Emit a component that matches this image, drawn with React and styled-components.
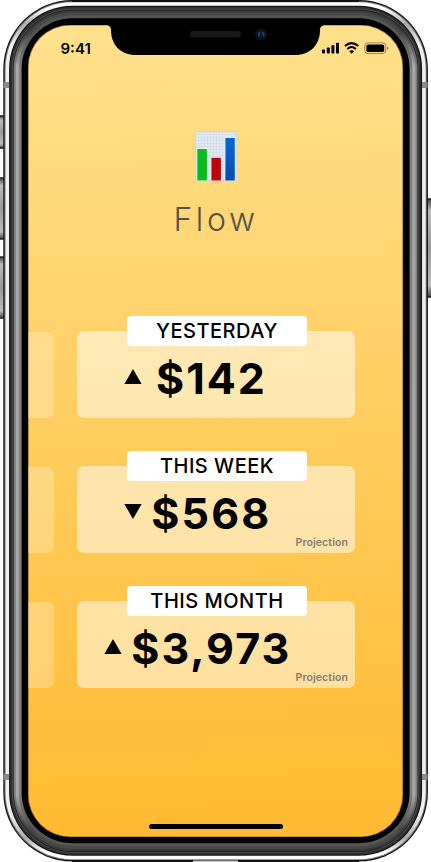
import React from "react";
import styled, { createGlobalStyle } from "styled-components";

const GlobalStyle = createGlobalStyle`
  *, *::before, *::after { box-sizing: border-box; }
  body { margin: 0; background: #fff; font-family: Inter, "Liberation Sans", sans-serif; color: #000; }
`;

const Phone = styled.div`
  position: relative;
  width: 431px;
  height: 862px;
  overflow: hidden;
  padding: 25px 28px;
`;

const BezelArt = styled.svg`
  position: absolute;
  inset: 0;
`;

const Screen = styled.main`
  position: relative;
  width: 375px;
  height: 812px;
  border-radius: 42px;
  overflow: hidden;
  display: flex;
  flex-direction: column;
  align-items: center;
  background: linear-gradient(178deg, #ffe18e 0%, #ffbb33 96%);
  box-shadow: inset 0 0 0 0.6px rgba(90, 65, 20, 0.7);
`;

const StatusBar = styled.header`
  width: 100%;
  height: 44px;
  flex: none;
  display: flex;
  justify-content: space-between;
  padding: 15px 14px 0 32.5px;
`;

const Clock = styled.time`
  font-size: 15px;
  line-height: 18px;
  font-weight: 600;
  letter-spacing: 0;
`;

const StatusIcons = styled.svg`
  display: block;
  margin-top: 2px;
`;

const NotchArt = styled.svg`
  position: absolute;
  left: 75px;
  top: 0;
`;

const Brand = styled.section`
  display: flex;
  flex-direction: column;
  align-items: center;
  padding: 62px 0 0 1px;
  height: 262px;
  flex: none;
`;

const Title = styled.h1`
  margin: 19px 0 0;
  font-size: 32px;
  line-height: 40px;
  font-weight: 300;
  letter-spacing: 3.6px;
  color: #555149;
`;

const Stats = styled.section`
  width: 100%;
  display: flex;
  flex-direction: column;
  gap: 48px;
`;

const StatRow = styled.div`
  display: flex;
  gap: 23px;
  height: 87px;
`;

const PreviousCard = styled.div`
  width: 26px;
  margin-top: 1px;
  border-radius: 0 7px 7px 0;
  background: rgba(255, 255, 255, 0.25);
`;

const Card = styled.article`
  position: relative;
  width: 278px;
  border-radius: 7px;
  background: rgba(255, 255, 255, 0.5);
`;

const Label = styled.h2`
  width: 180px;
  height: 30px;
  margin: -15px 0 0 50px;
  border-radius: 4px;
  background: #fff;
  font-size: 20px;
  line-height: 30px;
  font-weight: 500;
  letter-spacing: 0.5px;
  text-align: center;
`;

const Reading = styled.div`
  display: flex;
  align-items: center;
  height: 64px;
  gap: ${(p) => p.$gap}px;
  padding-left: ${(p) => p.$start}px;
`;

const Trend = styled.svg`
  flex: none;
  margin-top: -3px;
`;

const Amount = styled.strong`
  font-size: 43px;
  line-height: 52px;
  font-weight: 700;
  letter-spacing: ${(p) => p.$tracking}px;
`;

const Note = styled.small`
  position: absolute;
  right: 7px;
  bottom: 3px;
  font-size: 10.5px;
  line-height: 14px;
  font-weight: 600;
  letter-spacing: 0.1px;
  color: #837c70;
`;

const HomeBar = styled.div`
  width: 134px;
  height: 5px;
  border-radius: 3px;
  background: #000;
  margin: auto 0 8px;
`;

const stats = [
  { label: "YESTERDAY", amount: "$142", up: true, start: 47, gap: 14, tracking: 2 },
  { label: "THIS WEEK", amount: "$568", up: false, start: 47, gap: 9.3, tracking: 2.1 },
  { label: "THIS MONTH", amount: "$3,973", up: true, start: 27, gap: 9.3, tracking: 2 },
];

const rings = [
  { t: 0, fill: "#111" },
  { t: 1.2, fill: "#777" },
  { t: 2.2, fill: "url(#chrome)" },
  { t: 5.8, fill: "#161616" },
  { t: 7, fill: "#303030" },
  { t: 8.8, fill: "#555" },
  { t: 9.6, fill: "#1c1c1c" },
  { t: 10.4, fill: "url(#steel)" },
  { t: 12.5, fill: "url(#steelMid)" },
  { t: 15.5, fill: "url(#steelInner)" },
  { t: 18.3, fill: "#000" },
];

const sideButtons = [
  { x: -2, y: 116, h: 32 },
  { x: -2, y: 178, h: 61 },
  { x: -2, y: 257, h: 61 },
  { x: 426, y: 199, h: 98 },
];

function Fade({ id, dark, light }) {
  return (
    <linearGradient id={id} x1="0" y1="0" x2="0" y2="1">
      <stop offset="0" stopColor={dark} />
      <stop offset="0.025" stopColor={dark} />
      <stop offset="0.065" stopColor={light} />
      <stop offset="0.935" stopColor={light} />
      <stop offset="0.975" stopColor={dark} />
      <stop offset="1" stopColor={dark} />
    </linearGradient>
  );
}

function Bezel() {
  return (
    <BezelArt width="431" height="862" viewBox="0 0 431 862" aria-hidden="true">
      <defs>
        <linearGradient id="chrome" x1="0" y1="0" x2="0" y2="1">
          <stop offset="0" stopColor="#fff" />
          <stop offset="0.008" stopColor="#fff" />
          <stop offset="0.025" stopColor="#aaa" />
          <stop offset="0.05" stopColor="#f0f0f0" />
          <stop offset="0.95" stopColor="#f0f0f0" />
          <stop offset="0.975" stopColor="#aaa" />
          <stop offset="0.992" stopColor="#fff" />
          <stop offset="1" stopColor="#fff" />
        </linearGradient>
        <linearGradient id="button" x1="0" y1="0" x2="0" y2="1">
          <stop offset="0" stopColor="#444" />
          <stop offset="0.12" stopColor="#bbb" />
          <stop offset="0.5" stopColor="#999" />
          <stop offset="0.88" stopColor="#bbb" />
          <stop offset="1" stopColor="#444" />
        </linearGradient>
        <Fade id="steel" dark="#3a3a3a" light="#808080" />
        <Fade id="steelMid" dark="#484848" light="#a8a8a8" />
        <Fade id="steelInner" dark="#555" light="#808080" />
      </defs>
      {sideButtons.map((b) => (
        <rect key={b.y} x={b.x} y={b.y} width="7" height={b.h} rx="1.5" fill="url(#button)" stroke="#222" strokeWidth="1.5" />
      ))}
      {rings.map(({ t, fill }) => (
        <rect key={t} x={3.3 + t} y={t} width={424.6 - 2 * t} height={861.5 - 2 * t} rx={69 - t} fill={fill} />
      ))}
      <g fill="#8b8b8b">
        <rect x="3.5" y="82" width="5.5" height="6" />
        <rect x="422" y="82" width="5.5" height="6" />
        <rect x="3.5" y="774" width="5.5" height="6" />
        <rect x="422" y="774" width="5.5" height="6" />
      </g>
      <g fill="#111">
        <rect x="72" y="0" width="287" height="2" />
        <rect x="72" y="860" width="287" height="2" />
        <rect x="193" y="860.5" width="45" height="1.5" fill="#ccc" />
      </g>
    </BezelArt>
  );
}

function Notch() {
  return (
    <NotchArt width="225" height="31" viewBox="0 0 225 31" aria-hidden="true">
      <path d="M3 0H222C219.5 0 217 1.5 217 5C217 20 207 30 192 30H33C18 30 8 20 8 5C8 1.5 5.5 0 3 0Z" />
      <rect x="87" y="6" width="51" height="6.5" rx="3.2" fill="#191919" />
      <circle cx="158.2" cy="9.5" r="6" fill="#0b1016" />
      <circle cx="158.2" cy="9.5" r="4" fill="#0b1828" />
      <path d="M157 7.5Q154.8 9 156.3 11M159.5 7.5Q161.6 9 160.1 11" fill="none" stroke="#194c88" strokeWidth="1.6" />
    </NotchArt>
  );
}

function Indicators() {
  return (
    <StatusIcons width="68" height="13" viewBox="0 0 68 13" aria-hidden="true">
      <rect x="1" y="7.5" width="3" height="4" rx="0.8" />
      <rect x="5.8" y="5.5" width="3" height="6" rx="0.8" />
      <rect x="10.4" y="3.2" width="3" height="8.3" rx="0.8" />
      <rect x="15" y="0.8" width="3" height="10.7" rx="0.8" />
      <g fill="none" stroke="#000" strokeWidth="2">
        <path d="M23.9 4.1Q30.6 -1.8 37.3 4.1" />
        <path d="M26.3 6.9Q30.6 3.1 34.9 6.9" />
      </g>
      <path d="M28.2 9.3Q30.6 7.2 33 9.3L30.6 11.8Z" />
      <rect x="43.8" y="0.9" width="21" height="10.6" rx="3" fill="none" stroke="#000" strokeOpacity="0.4" />
      <rect x="45.4" y="2.5" width="17.8" height="7.4" rx="1.6" />
      <path d="M66 4.3Q68.6 6.2 66 8.1Z" fillOpacity="0.4" />
    </StatusIcons>
  );
}

function ChartEmblem() {
  return (
    <svg width="42" height="50" viewBox="0 0 42 50" aria-hidden="true">
      <defs>
        <pattern id="grid" width="3" height="3" patternUnits="userSpaceOnUse">
          <rect width="3" height="3" fill="#e3e9ee" />
          <path d="M0 0.5H3M0.5 0V3" stroke="#cfe0eb" strokeWidth="0.8" />
        </pattern>
        <linearGradient id="blueBar" x1="0" y1="0" x2="0" y2="1">
          <stop stopColor="#0868d4" />
          <stop offset="1" stopColor="#064bae" />
        </linearGradient>
      </defs>
      <rect x="0.2" y="0.7" width="41.6" height="49" fill="url(#grid)" stroke="#cbd0cb" strokeWidth="0.7" />
      <g stroke="#fff" strokeOpacity="0.7" strokeWidth="1.2" paintOrder="stroke">
        <rect x="2.3" y="18" width="9.6" height="31.5" fill="#08bd1b" />
        <rect x="16.4" y="26.8" width="9.5" height="22.7" fill="#bd0508" />
        <rect x="30.4" y="7" width="9.4" height="42.5" fill="url(#blueBar)" />
      </g>
    </svg>
  );
}

export default function App() {
  return (
    <>
      <GlobalStyle />
      <Phone>
        <Bezel />
        <Screen>
          <Notch />
          <StatusBar>
            <Clock>9:41</Clock>
            <Indicators />
          </StatusBar>
          <Brand>
            <ChartEmblem />
            <Title>Flow</Title>
          </Brand>
          <Stats>
            {stats.map((s) => (
              <StatRow key={s.label}>
                <PreviousCard />
                <Card>
                  <Label>{s.label}</Label>
                  <Reading $start={s.start} $gap={s.gap}>
                    <Trend width="18" height="15" viewBox="0 0 18 15">
                      <path d={s.up ? "M9 0L17.6 15H0.4Z" : "M0.4 0H17.6L9 15Z"} />
                    </Trend>
                    <Amount $tracking={s.tracking}>{s.amount}</Amount>
                  </Reading>
                  {s.label !== "YESTERDAY" && <Note>Projection</Note>}
                </Card>
              </StatRow>
            ))}
          </Stats>
          <HomeBar />
        </Screen>
      </Phone>
    </>
  );
}
